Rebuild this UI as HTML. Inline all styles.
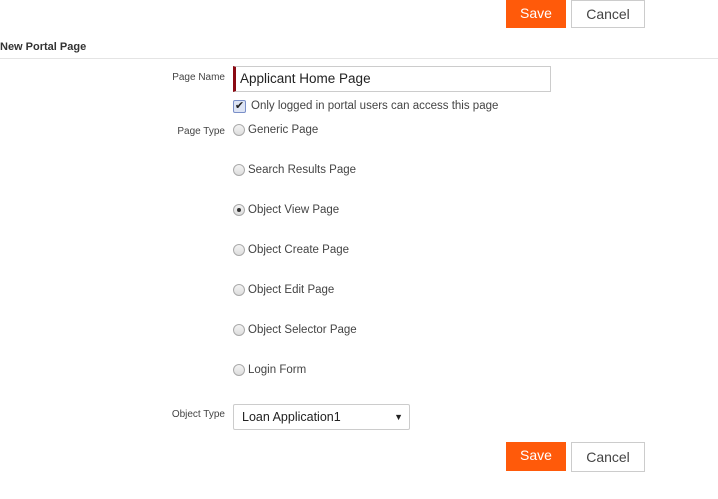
<!DOCTYPE html>
<html><head><style>
*{box-sizing:border-box;margin:0;padding:0}
body{width:718px;height:499px;background:#fff;font-family:"Liberation Sans",sans-serif;position:relative;overflow:hidden;color:#333}
.a{position:absolute}
.save{background:#ff5a0a;color:#fff;font-size:14px;text-align:center;line-height:27px}
.cancel{border:1px solid #ccc;background:#fff;color:#444;font-size:14px;text-align:center;line-height:27px}
.lbl{font-size:10px;color:#444;text-align:right;width:70px}
.rad{width:12px;height:12px;border-radius:50%;border:1px solid #aaa;background:linear-gradient(#f4f4f4,#ddd)}
.rt{font-size:11.5px;color:#444}
</style></head><body>
<div class="a save" style="left:506px;top:0;width:60px;height:28px">Save</div>
<div class="a cancel" style="left:571px;top:0;width:74px;height:28px">Cancel</div>
<div class="a" style="left:0;top:41px;font-size:11px;font-weight:bold;color:#333">New Portal Page</div>
<div class="a" style="left:0;top:58px;width:718px;height:1px;background:#e4e4e4"></div>
<div class="a lbl" style="left:155px;top:72px">Page Name</div>
<div class="a" style="left:233px;top:66px;width:318px;height:26px;border:1px solid #ccc;border-left:3px solid #8b0a14;font-size:13.5px;line-height:24px;padding-left:4px;color:#222">Applicant Home Page</div>
<div class="a" style="left:233px;top:100px;width:13px;height:13px;border:1px solid #7a8fc8;background:#dde4f4;border-radius:2px;font-size:11px;line-height:11px;text-align:center;color:#222">✔</div>
<div class="a rt" style="left:251px;top:100px">Only logged in portal users can access this page</div>
<div class="a lbl" style="left:155px;top:126px">Page Type</div>
<div class="a rad" style="left:233px;top:124px"></div><div class="a rt" style="left:248px;top:124px">Generic Page</div>
<div class="a rad" style="left:233px;top:164px"></div><div class="a rt" style="left:248px;top:164px">Search Results Page</div>
<div class="a rad" style="left:233px;top:204px"><div style="width:4px;height:4px;border-radius:50%;background:#333;margin:3px"></div></div><div class="a rt" style="left:248px;top:204px">Object View Page</div>
<div class="a rad" style="left:233px;top:244px"></div><div class="a rt" style="left:248px;top:244px">Object Create Page</div>
<div class="a rad" style="left:233px;top:284px"></div><div class="a rt" style="left:248px;top:284px">Object Edit Page</div>
<div class="a rad" style="left:233px;top:324px"></div><div class="a rt" style="left:248px;top:324px">Object Selector Page</div>
<div class="a rad" style="left:233px;top:364px"></div><div class="a rt" style="left:248px;top:364px">Login Form</div>
<div class="a lbl" style="left:155px;top:409px">Object Type</div>
<div class="a" style="left:233px;top:404px;width:177px;height:26px;border:1px solid #ccc;border-radius:2px;font-size:12.5px;line-height:24px;padding-left:8px;color:#222">Loan Application1<span style="position:absolute;right:6px;font-size:9px">▼</span></div>
<div class="a save" style="left:506px;top:442px;width:60px;height:29px">Save</div>
<div class="a cancel" style="left:571px;top:442px;width:74px;height:30px;line-height:28px">Cancel</div>
</body></html>
